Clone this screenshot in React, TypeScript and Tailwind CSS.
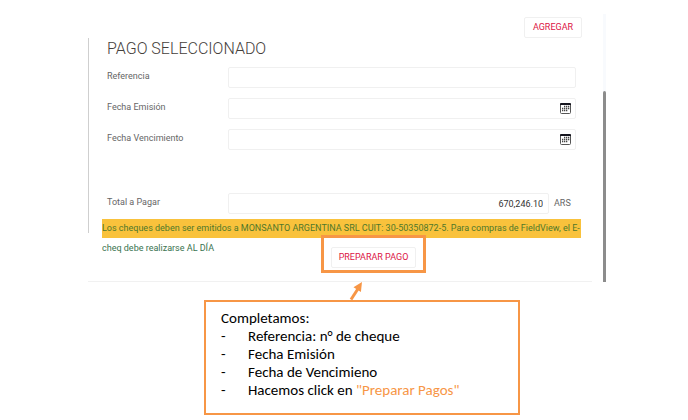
import React from "react";

export default function App() {
  return (
    <main className="bg-white pt-[14px] pb-1 font-[Roboto,'Liberation_Sans',sans-serif]">
      <div className="flex pl-[88px] pr-[82px]">
        <form className="min-w-0 flex-1 border-b border-[#f1f1f1] mr-[11px] pb-2" onSubmit={(e) => e.preventDefault()}>
          <div className="flex justify-end pt-[3px] pr-[10px]">
            <ActionButton className="w-[58px]">AGREGAR</ActionButton>
          </div>

          <section className="h-[195px] border-l border-[#cfcfcf] pl-[18px] pr-4 text-[9px] text-[#666]">
            <h1 className="h-[29px] text-[16px] font-light leading-[21px] text-[#45403b]">PAGO SELECCIONADO</h1>
            <div className="space-y-[10px]">
              <Field id="referencia" label="Referencia" />
              <Field id="emision" label="Fecha Emisión" date />
              <Field id="vencimiento" label="Fecha Vencimiento" date />
            </div>
            <div className="mt-[43px] flex items-center">
              <label htmlFor="total" className="w-[121px] shrink-0 pb-0.5">Total a Pagar</label>
              <input id="total" readOnly value="670,246.10" className="h-[21px] min-w-0 flex-1 border border-[#f0f0f0] rounded-xs px-[5px] text-right text-[9px] text-[#333] outline-none" />
              <span className="w-[27px] pl-[5px]">ARS</span>
            </div>
          </section>

          <p className="relative -mt-[14px] ml-[14px] mr-[11px] whitespace-nowrap bg-[#f9c23c] text-[9px] leading-[19px] text-[#50782a]">
            Los cheques deben ser emitidos a MONSANTO ARGENTINA SRL CUIT: 30-50350872-5. Para compras de FieldView, el E-
          </p>
          <div className="ml-[14px] flex items-start">
            <p className="w-[219px] text-[9px] leading-[21px] text-[#39734f]">cheq debe realizarse AL DÍA</p>
            <div className="relative -mt-[3px] border-3 border-[#f79646] px-[7px] pt-[9px] pb-[2px]">
              <ActionButton className="w-[85px]">PREPARAR PAGO</ActionButton>
            </div>
          </div>
        </form>

        <div className="w-[3px] bg-[#f8fafd] pt-[77px]">
          <div className="h-full rounded-t-xs bg-[#8c8c8c]" />
        </div>
      </div>

      <div className="pl-[204px] pr-[168px]">
        <svg className="ml-[144px] block h-[18px] w-[16px]" viewBox="0 0 16 18" aria-hidden="true">
          <path d="M3 17.5 10.5 6" stroke="#f79646" strokeWidth="3" fill="none" />
          <path d="M14 0 5.5 5.2l7.4 4.9z" fill="#f79646" />
        </svg>
        <div className="border-2 border-[#f79646] px-[15px] pt-[7px] pb-[14px] font-[Carlito,Calibri,Lato,sans-serif] text-[15px] leading-[18px] text-black">
          <p>Completamos:</p>
          <ul>
            <Step>Referencia: n° de cheque</Step>
            <Step>Fecha Emisión</Step>
            <Step>Fecha de Vencimieno</Step>
            <Step>Hacemos click en <span className="text-[#f79646]">"Preparar Pagos"</span></Step>
          </ul>
        </div>
      </div>
    </main>
  );
}

function ActionButton({ className, children }: { className: string; children: React.ReactNode }) {
  return <button type="button" className={`${className} block h-[21px] whitespace-nowrap rounded-xs border border-[#f0f0f0] text-[9px] text-[#dc1445]`}>{children}</button>;
}

function Field({ id, label, date }: { id: string; label: string; date?: boolean }) {
  return (
    <div className="flex items-center">
      <label htmlFor={id} className="w-[121px] shrink-0 pb-0.5">{label}</label>
      <div className="flex h-[21px] min-w-0 flex-1 items-center rounded-xs border border-[#f0f0f0] pr-1">
        <input id={id} className="h-full min-w-0 flex-1 px-1 outline-none" />
        {date && <CalendarIcon />}
      </div>
    </div>
  );
}

function CalendarIcon() {
  return (
    <svg className="h-[11px] w-[11px]" viewBox="0 0 11 11" aria-hidden="true">
      <rect x="0.5" y="0.5" width="10" height="10" rx="1" fill="#fff" stroke="#555" />
      <path d="M0 1.2Q0 0 1 0h9q1 0 1 1.2V2H0z" fill="#15151f" />
      <path d="M4 3.5h1.3M6 3.5h1.3M8 3.5h1.3M2 5.5h1.3M4 5.5h1.3M6 5.5h1.3M8 5.5h1.3M2 7.5h1.3M4 7.5h1.3M6 7.5h1.3" stroke="#444" strokeWidth="1.3" />
    </svg>
  );
}

function Step({ children }: { children: React.ReactNode }) {
  return <li className="flex"><span className="w-[27px] shrink-0">-</span><span>{children}</span></li>;
}
